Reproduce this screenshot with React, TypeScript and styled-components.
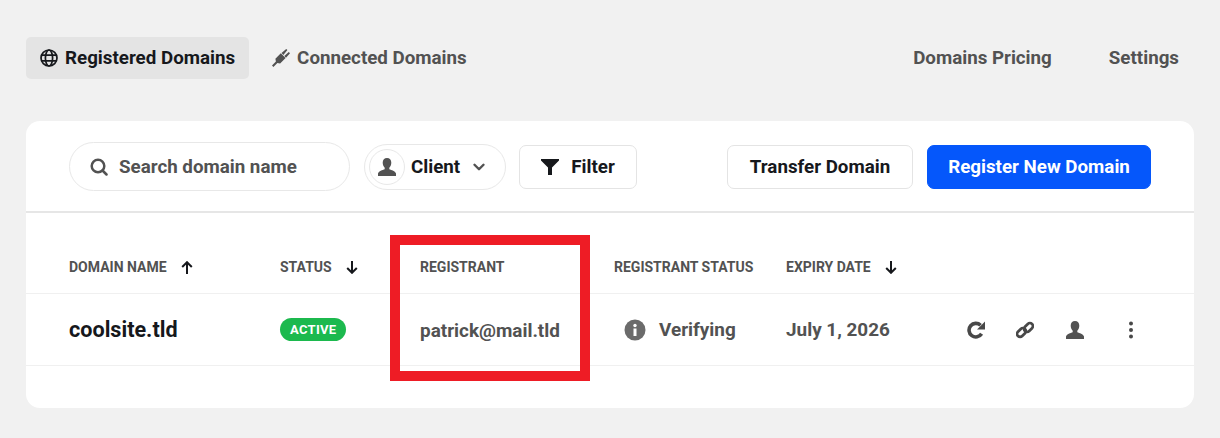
import styled, { createGlobalStyle } from 'styled-components';
import { ChevronDown } from 'lucide-react';

const GlobalStyle = createGlobalStyle`
  * { box-sizing: border-box; }
  html, body { margin: 0; padding: 0; }
  body {
    background: #f1f1f1;
    font-family: Roboto, "Liberation Sans", sans-serif;
    color: #101317;
  }
`;

const Page = styled.div`
  position: relative;
  width: 1220px;
  height: 438px;
  padding: 37px 26px 0;
  overflow: hidden;
`;

const Nav = styled.nav`
  display: flex;
  align-items: center;
  height: 42px;
  margin-bottom: 42px;
`;

const Tab = styled.a<{ $active?: boolean }>`
  display: flex;
  align-items: center;
  gap: 7px;
  height: 42px;
  padding: 0 14px;
  border-radius: 5px;
  font-size: 18.75px;
  font-weight: 700;
  color: ${p => (p.$active ? '#16181c' : '#525252')};
  background: ${p => (p.$active ? '#e4e4e4' : 'transparent')};
  margin-right: 9px;
`;

const NavRight = styled.div`
  margin-left: auto;
  display: flex;
  gap: 57px;
  padding-right: 15px;
`;

const NavLink = styled.a`
  font-size: 18.75px;
  font-weight: 700;
  color: #525252;
`;

const Card = styled.section`
  background: #fff;
  border-radius: 14px;
  width: 1168px;
  height: 287px;
`;

const Toolbar = styled.div`
  display: flex;
  align-items: center;
  height: 92px;
  padding: 1px 43px 0;
  border-bottom: 2px solid #e6e6e6;
`;

const Search = styled.div`
  display: flex;
  align-items: center;
  gap: 11px;
  width: 281px;
  height: 49px;
  padding-left: 20px;
  border: 1px solid #e8e8e8;
  border-radius: 25px;
  font-size: 18.75px;
  font-weight: 700;
  color: #525252;
  margin-right: 14px;
`;

const ClientSelect = styled.div`
  display: flex;
  align-items: center;
  width: 142px;
  height: 46px;
  padding-left: 4px;
  border: 1px solid #e8e8e8;
  border-radius: 23px;
  font-size: 18.75px;
  font-weight: 700;
  color: #16181c;
  margin-right: 13px;
`;

const Avatar = styled.span`
  display: flex;
  align-items: center;
  justify-content: center;
  width: 36px;
  height: 36px;
  border: 1px solid #e8e8e8;
  border-radius: 50%;
  margin-right: 6px;
`;

const Chevron = styled(ChevronDown)`
  margin-left: 10px;
  color: #525252;
`;

const OutlineButton = styled.button<{ $width: number }>`
  display: flex;
  align-items: center;
  justify-content: center;
  gap: 12px;
  width: ${p => p.$width}px;
  height: 44px;
  padding: 0;
  background: #fff;
  border: 1px solid #e4e4e4;
  border-radius: 7px;
  font: 700 18.75px Roboto, sans-serif;
  color: #16181c;
`;

const Spacer = styled.div`
  flex: 1;
`;

const PrimaryButton = styled(OutlineButton)`
  margin-left: 14px;
  background: #0557fb;
  border-color: #0557fb;
  color: #fff;
`;

const Columns = styled.div`
  display: grid;
  grid-template-columns: 211px 140px 194px 172px 172px 1fr;
  padding-left: 43px;
  align-items: center;
`;

const HeadRow = styled(Columns)`
  height: 81px;
  padding-top: 28px;
  border-bottom: 1px solid #f0f0f0;
`;

const HeadCell = styled.div`
  display: flex;
  align-items: center;
  gap: 14px;
  font-size: 14px;
  font-weight: 700;
  color: #525252;
  white-space: nowrap;
`;

const BodyRow = styled(Columns)`
  height: 72px;
  border-bottom: 1px solid #f0f0f0;
`;

const DomainName = styled.div`
  font-size: 21.6px;
  font-weight: 700;
  color: #16181c;
`;

const Badge = styled.span`
  display: inline-block;
  height: 23px;
  line-height: 23px;
  padding: 0 10px;
  border-radius: 12px;
  background: #1cb94e;
  color: #fff;
  font-size: 13px;
  font-weight: 700;
  letter-spacing: 0.3px;
`;

const BodyText = styled.div<{ $indent?: number }>`
  display: flex;
  align-items: center;
  gap: 13px;
  padding-left: ${p => p.$indent ?? 0}px;
  font-size: 18.9px;
  font-weight: 700;
  color: #525252;
  white-space: nowrap;
`;

const EmailText = styled(BodyText)`
  padding-top: 2px;
`;

const Actions = styled.div`
  display: flex;
  align-items: center;
  margin-left: 9px;
  gap: 31px;
`;

const MenuAction = styled.span`
  display: flex;
  margin-left: 13px;
`;

const Highlight = styled.div`
  position: absolute;
  left: 390px;
  top: 235px;
  width: 200px;
  height: 146px;
  border: 10px solid #ee1c25;
`;

const GlobeIcon = () => (
  <svg width="18" height="18" viewBox="0 0 18 18" fill="none" stroke="#16181c" strokeWidth="1.7">
    <circle cx="9" cy="9" r="8" />
    <ellipse cx="9" cy="9" rx="3.6" ry="8" />
    <path d="M1.5 6.200h15M1.500 11.800h15" />
  </svg>
);

const PlugIcon = () => (
  <svg width="18" height="18" viewBox="0 0 18 18" fill="#525252">
    <path d="M0 16.600l3.900-4.100-.5-2.700 5.400-5.500 4.800 4.800-5.500 5.400-2.700-.5L1.400 18z" />
    <path d="M9.500 4.100L14.200 0l1.200 1.100-4 4.800zM12.300 7L16.800 3l1.200 1.200-4 4.500z" />
  </svg>
);

const SearchIcon = () => (
  <svg width="18" height="18" viewBox="0 0 18 18" fill="none" stroke="#525252" strokeWidth="2.500">
    <circle cx="8" cy="8" r="6.300" />
    <path d="M12.500 12.500l4 4" strokeLinecap="round" />
  </svg>
);

const PersonIcon = ({ size = 20 }: { size?: number }) => (
  <svg width={size} height={size} viewBox="0 0 20 20" fill="#525252">
    <path d="M10 1c2.700 0 4.300 2 4.300 4.800 0 2.200-1 4-2 5v1.400c2 .8 6.200 1.700 6.700 4.300V19H1v-2.500c.5-2.600 4.700-3.500 6.700-4.300v-1.400c-1-1-2-2.800-2-5C5.700 3 7.300 1 10 1z" />
  </svg>
);

const FunnelIcon = () => (
  <svg width="18" height="16" viewBox="0 0 18 16" fill="#16181c">
    <path d="M0 0h18v1.500L11 8.500V16H7V8.500L0 1.500z" />
  </svg>
);

const ArrowIcon = ({ up }: { up?: boolean }) => (
  <svg width="12" height="13" viewBox="0 0 12 13" fill="none" stroke="#16181c" strokeWidth="2">
    {up ? <path d="M6 13V1.500M1.200 6L6 1.200 10.800 6" /> : <path d="M6 0v11.500M1.200 7L6 11.800 10.800 7" />}
  </svg>
);

const InfoIcon = () => (
  <svg width="22" height="22" viewBox="0 0 22 22">
    <circle cx="11" cy="11" r="10.500" fill="#6b6b6b" />
    <rect x="9.500" y="9.500" width="3" height="7.500" fill="#fff" />
    <circle cx="11" cy="6.500" r="1.700" fill="#fff" />
  </svg>
);

const RefreshIcon = () => (
  <svg width="18" height="18" viewBox="0 0 18 18" fill="none">
    <path d="M14.600 12.800A6.800 6.800 0 1 1 13.600 4.300" stroke="#484848" strokeWidth="3.600" />
    <path d="M18 .5v8h-8z" fill="#484848" />
  </svg>
);

const LinkIcon = () => (
  <svg width="18" height="18" viewBox="0 0 18 18" fill="none" stroke="#484848" strokeWidth="2.700">
    <rect x="0.500" y="8.500" width="10" height="6" rx="3" transform="rotate(-45 5.500 11.500)" />
    <rect x="7.500" y="3.500" width="10" height="6" rx="3" transform="rotate(-45 12.500 6.500)" />
  </svg>
);

const DotsIcon = () => (
  <svg width="4" height="18" viewBox="0 0 4 18" fill="#484848">
    <circle cx="2" cy="2.500" r="2" />
    <circle cx="2" cy="9" r="2" />
    <circle cx="2" cy="15.500" r="2" />
  </svg>
);

export default function App() {
  return (
    <Page>
      <GlobalStyle />
      <Nav>
        <Tab $active><GlobeIcon />Registered Domains</Tab>
        <Tab><PlugIcon />Connected Domains</Tab>
        <NavRight>
          <NavLink>Domains Pricing</NavLink>
          <NavLink>Settings</NavLink>
        </NavRight>
      </Nav>
      <Card>
        <Toolbar>
          <Search><SearchIcon />Search domain name</Search>
          <ClientSelect>
            <Avatar><PersonIcon /></Avatar>
            Client
            <Chevron size={18} strokeWidth={3.200} />
          </ClientSelect>
          <OutlineButton $width={118}><FunnelIcon />Filter</OutlineButton>
          <Spacer />
          <OutlineButton $width={186}>Transfer Domain</OutlineButton>
          <PrimaryButton $width={224}>Register New Domain</PrimaryButton>
        </Toolbar>
        <HeadRow>
          <HeadCell>DOMAIN NAME <ArrowIcon up /></HeadCell>
          <HeadCell>STATUS <ArrowIcon /></HeadCell>
          <HeadCell>REGISTRANT</HeadCell>
          <HeadCell>REGISTRANT STATUS</HeadCell>
          <HeadCell>EXPIRY DATE <ArrowIcon /></HeadCell>
        </HeadRow>
        <BodyRow>
          <DomainName>coolsite.tld</DomainName>
          <div><Badge>ACTIVE</Badge></div>
          <EmailText>patrick@mail.tld</EmailText>
          <BodyText $indent={10}><InfoIcon />Verifying</BodyText>
          <BodyText>July 1, 2026</BodyText>
          <Actions>
            <RefreshIcon />
            <LinkIcon />
            <PersonIcon />
            <MenuAction><DotsIcon /></MenuAction>
          </Actions>
        </BodyRow>
      </Card>
      <Highlight />
    </Page>
  );
}
